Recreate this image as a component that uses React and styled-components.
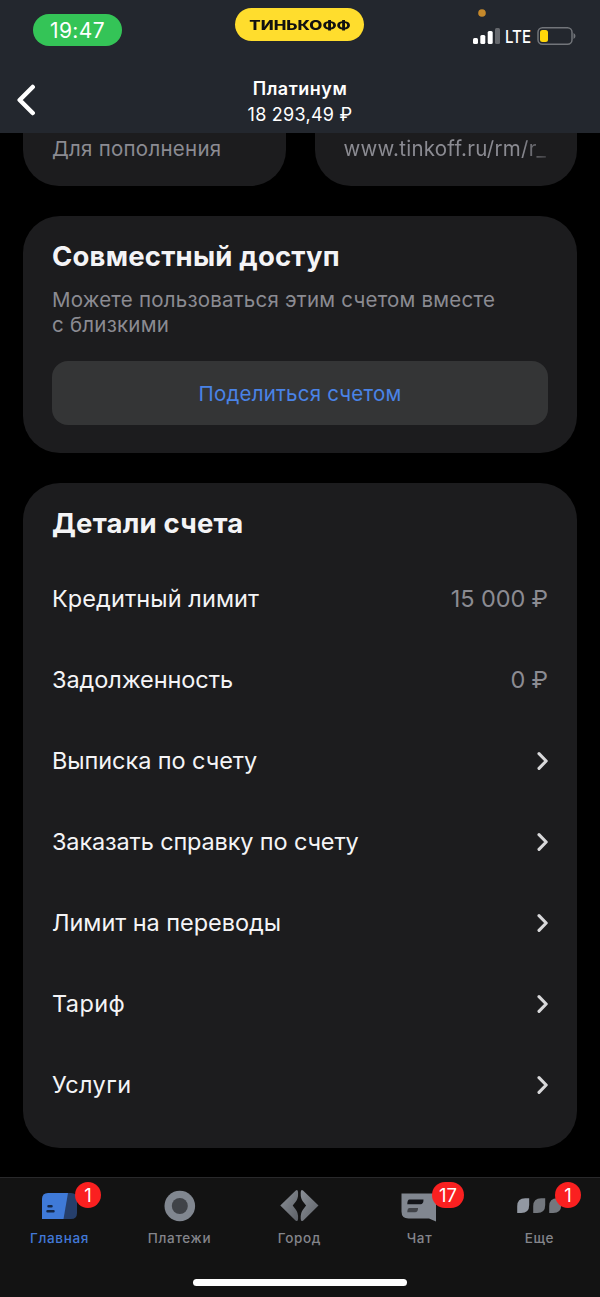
import React from "react";
import styled, { createGlobalStyle } from "styled-components";

const GlobalStyle = createGlobalStyle`
  * {
    box-sizing: border-box;
  }

  body {
    margin: 0;
    background: #000;
    color: #f4f4f6;
    font-family: Inter, "Liberation Sans", sans-serif;
  }
`;

const Screen = styled.div`
  width: 600px;
  height: 1297px;
  display: flex;
  flex-direction: column;
  overflow: hidden;
  background: #000;
`;

const Header = styled.header`
  height: 133px;
  flex-shrink: 0;
  background: #23272e;
`;

const StatusBar = styled.div`
  height: 66px;
  padding: 8px 24px 0 33px;
  display: grid;
  grid-template-columns: 1fr 129px 1fr;
  align-items: start;
`;

const Time = styled.div`
  width: 89px;
  height: 32px;
  margin-top: 6px;
  border-radius: 16px;
  background: #34c457;
  color: #fff;
  font-size: 21px;
  line-height: 33px;
  text-align: center;
  letter-spacing: 0.4px;
`;

const Brand = styled.div`
  height: 33px;
  margin-left: -5px;
  width: 129px;
  padding-left: 1px;
  border-radius: 17px;
  background: #ffdd2d;
  color: #111;
  display: flex;
  align-items: center;
  justify-content: center;
`;

const BrandName = styled.span`
  font-size: 13px;
  font-weight: 800;
  transform: scaleX(1.3);
`;

const Indicators = styled.div`
  display: flex;
  flex-direction: column;
  align-items: flex-end;
`;

const Signals = styled.svg`
  display: block;
`;

const NavBar = styled.div`
  height: 67px;
  padding: 0 15px;
  display: grid;
  grid-template-columns: 24px 1fr 24px;
`;

const BackButton = styled.button`
  height: 32px;
  margin-top: 18px;
  padding: 0;
  border: none;
  background: none;
  text-align: left;
`;

const Account = styled.div`
  padding-top: 10px;
  text-align: center;
  color: #fff;
`;

const AccountName = styled.div`
  font-size: 18px;
  font-weight: 600;
  line-height: 26px;
  letter-spacing: 0.5px;
`;

const Balance = styled.div`
  font-size: 18px;
  line-height: 26px;
  letter-spacing: 0.25px;
`;

const Content = styled.main`
  flex: 1;
  padding: 0 23px;
  display: flex;
  flex-direction: column;
  gap: 30px;
`;

const Requisites = styled.div`
  height: 53px;
  display: grid;
  grid-template-columns: 1fr 1fr;
  gap: 29px;
`;

const RequisiteCard = styled.div`
  padding: 3px 29px 0;
  border-radius: 0 0 36px 36px;
  background: #1c1c1e;
  color: #8b8b92;
  font-size: 20.5px;
  line-height: 26px;
  letter-spacing: 0.25px;
`;

const Faded = styled.span`
  display: block;
  white-space: nowrap;
  overflow: hidden;
  mask-image: linear-gradient(to right, #000 87%, transparent 105%);
`;

const Card = styled.section`
  height: ${(props) => props.$height};
  padding: 24px 29px 0;
  border-radius: 37px;
  background: #1c1c1e;
`;

const CardTitle = styled.h2`
  margin: 0;
  font-size: 27.5px;
  font-weight: 700;
  line-height: 32px;
  letter-spacing: 0.2px;
`;

const CardText = styled.p`
  margin: 15px 0 23px;
  color: #8b8b92;
  font-size: 20.5px;
  line-height: 25.4px;
  letter-spacing: 0.22px;
`;

const ShareButton = styled.button`
  width: 100%;
  height: 64px;
  padding: 1px 0 0;
  border: none;
  border-radius: 16px;
  background: #343536;
  color: #4a83e6;
  font-family: inherit;
  font-size: 20.5px;
  letter-spacing: 0.2px;
`;

const Rows = styled.div`
  margin-top: 18.8px;
`;

const Row = styled.div`
  height: 81.1px;
  display: flex;
  align-items: center;
  justify-content: space-between;
  font-size: 23.5px;
  letter-spacing: ${(props) => props.$tracking || "0"};
`;

const RowValue = styled.span`
  color: #8b8b92;
  letter-spacing: -0.1px;
`;

const TabBar = styled.nav`
  height: 120px;
  flex-shrink: 0;
  border-top: 1px solid #29292b;
  background: #131313;
`;

const Tabs = styled.div`
  height: 101px;
  display: grid;
  grid-template-columns: repeat(5, 1fr);
`;

const Tab = styled.div`
  position: relative;
  display: flex;
  flex-direction: column;
  align-items: center;
  padding-right: 1px;
  color: ${(props) => (props.$active ? "#4279d8" : "#84858b")};
  font-size: 13.5px;
  font-weight: 500;
  line-height: 18px;
  letter-spacing: 0.65px;
`;

const TabIcon = styled.svg`
  width: 48px;
  height: 44px;
  margin: 7px 0 0;
`;

const Badge = styled.span`
  position: absolute;
  top: 4px;
  left: ${(props) => props.$left};
  min-width: 26px;
  height: 26px;
  padding: 0 7px;
  border-radius: 13px;
  background: #fa2020;
  color: #fff;
  font-size: 18.5px;
  font-weight: 400;
  line-height: 26px;
  letter-spacing: 0;
  text-align: center;
`;

const HomeIndicator = styled.div`
  width: 214px;
  height: 7px;
  margin: 0 auto;
  border-radius: 4px;
  background: #fff;
`;

const details = [
  { label: "Кредитный лимит", value: "15 000 ₽", tracking: "0.08px" },
  { label: "Задолженность", value: "0 ₽", tracking: "-0.08px" },
  { label: "Выписка по счету", tracking: "-0.07px" },
  { label: "Заказать справку по счету", tracking: "-0.15px" },
  { label: "Лимит на переводы", tracking: "-0.05px" },
  { label: "Тариф", tracking: "0.4px" },
  { label: "Услуги", tracking: "0.35px" },
];

// Tab icons share one 48x44 canvas, centred on x = 24
const tabs = [
  {
    label: "Главная",
    active: true,
    badge: "1",
    badgeLeft: "75px",
    icon: (
      <>
        <path d="M22 8h13q6 0 6 6v14q0 6-6 6H22z" fill="#263f6b" />
        <path d="M12 8h20l-4.500 26H6V14q0-6 6-6z" fill="#3f7ad8" />
        <path
          d="M12.500 21.300h3M11.500 26.200h6"
          stroke="#132747"
          strokeWidth="2.500"
          strokeLinecap="round"
        />
      </>
    ),
  },
  {
    label: "Платежи",
    icon: (
      <>
        <circle cx="23.800" cy="21" r="15.300" fill="#818790" />
        <circle cx="23.800" cy="21" r="8" fill="#404348" />
      </>
    ),
  },
  {
    label: "Город",
    icon: (
      <>
        <defs>
          <linearGradient id="city" x1="0" y1="0" x2="1" y2="1">
            <stop offset="0" stopColor="#8b9097" />
            <stop offset="1" stopColor="#5d6167" />
          </linearGradient>
        </defs>
        <path
          d="M19.500 5.700 4.300 20.600 19.500 35.500Q22.100 37.300 22.100 33.500 22.300 27.500 19.700 24.500L16.700 20.600 19.700 16.700Q22.300 13.700 22.100 7.700 22.100 3.900 19.500 5.700z"
          fill="url(#city)"
        />
        <path
          d="M27.300 5.700 42.500 20.600 27.300 35.500Q24.700 37.300 24.700 33.500 24.500 27.500 27.100 24.500L30.100 20.600 27.100 16.700Q24.500 13.700 24.700 7.700 24.700 3.900 27.300 5.700z"
          fill="url(#city)"
        />
      </>
    ),
  },
  {
    label: "Чат",
    badge: "17",
    badgeLeft: "72px",
    icon: (
      <>
        <path d="M5.500 8.500H40v28l-7-3H12.500q-7 0-7-7z" fill="#818790" />
        <path d="M13.500 14.500h14q0 4.800-3 4.800H11.300q0-4.800 2.200-4.800z" fill="#131519" />
        <path d="M13.500 23H22q0 4.300-3 4.300h-7.700q0-4.300 2.200-4.300z" fill="#404348" />
      </>
    ),
  },
  {
    label: "Еще",
    badge: "1",
    badgeLeft: "75px",
    icon: (
      <>
        <path d="M9.200 13.200h4V20q0 8-8 8h-4v-6.800q0-8 8-8z" fill="#9298a2" />
        <path d="M25.200 13.200h4V20q0 8-8 8h-4v-6.800q0-8 8-8z" fill="#73777d" />
        <path d="M41.200 13.200h4V20q0 8-8 8h-4v-6.800q0-8 8-8z" fill="#73777d" />
      </>
    ),
  },
];

function Chevron() {
  return (
    <svg width="11" height="20" viewBox="0 0 11 20" fill="none">
      <path
        d="M2 2.700 9.200 10 2 17.300"
        stroke="#d8d8da"
        strokeWidth="3.100"
        strokeLinecap="round"
        strokeLinejoin="round"
      />
    </svg>
  );
}

function StatusIndicators() {
  return (
    <Signals width="103" height="40" viewBox="473 8 103 40">
      <circle cx="482" cy="13" r="3.800" fill="#c6892b" />
      <g fill="#fff">
        <rect x="473" y="38" width="5" height="6" rx="1.500" />
        <rect x="480.300" y="35" width="5" height="9" rx="1.500" />
        <rect x="487.700" y="31" width="5" height="13" rx="1.500" />
        <rect x="495" y="28" width="5" height="16" rx="1.500" opacity="0.3" />
      </g>
      <text x="505" y="43" fill="#fff" fontSize="17.500" fontWeight="500" textLength="26" lengthAdjust="spacingAndGlyphs">
        LTE
      </text>
      <rect x="538" y="27.700" width="34" height="16.600" rx="4.500" fill="none" stroke="#72757a" strokeWidth="1.500" />
      <rect x="540" y="30" width="8" height="12" rx="2.500" fill="#ffd60a" />
      <path d="M573.500 33q2 1 2 3t-2 3z" fill="#72757a" />
    </Signals>
  );
}

function App() {
  return (
    <>
      <GlobalStyle />
      <Screen>
        <Header>
          <StatusBar>
            <Time>19:47</Time>
            <Brand>
              <BrandName>ТИНЬКОФФ</BrandName>
            </Brand>
            <Indicators>
              <StatusIndicators />
            </Indicators>
          </StatusBar>
          <NavBar>
            <BackButton aria-label="Назад">
              <svg width="22" height="32" viewBox="0 0 22 32" fill="none">
                <path
                  d="M17.700 3 4.700 16 17.700 29"
                  stroke="#fff"
                  strokeWidth="4.500"
                  strokeLinecap="round"
                  strokeLinejoin="round"
                />
              </svg>
            </BackButton>
            <Account>
              <AccountName>Платинум</AccountName>
              <Balance>18 293,49 ₽</Balance>
            </Account>
          </NavBar>
        </Header>

        <Content>
          <Requisites>
            <RequisiteCard>Для пополнения</RequisiteCard>
            <RequisiteCard>
              <Faded>www.tinkoff.ru/rm/r_</Faded>
            </RequisiteCard>
          </Requisites>

          <Card $height="237px">
            <CardTitle>Совместный доступ</CardTitle>
            <CardText>
              Можете пользоваться этим счетом вместе
              <br />с близкими
            </CardText>
            <ShareButton>Поделиться счетом</ShareButton>
          </Card>

          <Card $height="665px">
            <CardTitle>Детали счета</CardTitle>
            <Rows>
              {details.map((item) => (
                <Row key={item.label} $tracking={item.tracking}>
                  <span>{item.label}</span>
                  {item.value ? <RowValue>{item.value}</RowValue> : <Chevron />}
                </Row>
              ))}
            </Rows>
          </Card>
        </Content>

        <TabBar>
          <Tabs>
            {tabs.map((tab) => (
              <Tab key={tab.label} $active={tab.active}>
                <TabIcon viewBox="0 0 48 44">{tab.icon}</TabIcon>
                {tab.label}
                {tab.badge && <Badge $left={tab.badgeLeft}>{tab.badge}</Badge>}
              </Tab>
            ))}
          </Tabs>
          <HomeIndicator />
        </TabBar>
      </Screen>
    </>
  );
}

export default App;
